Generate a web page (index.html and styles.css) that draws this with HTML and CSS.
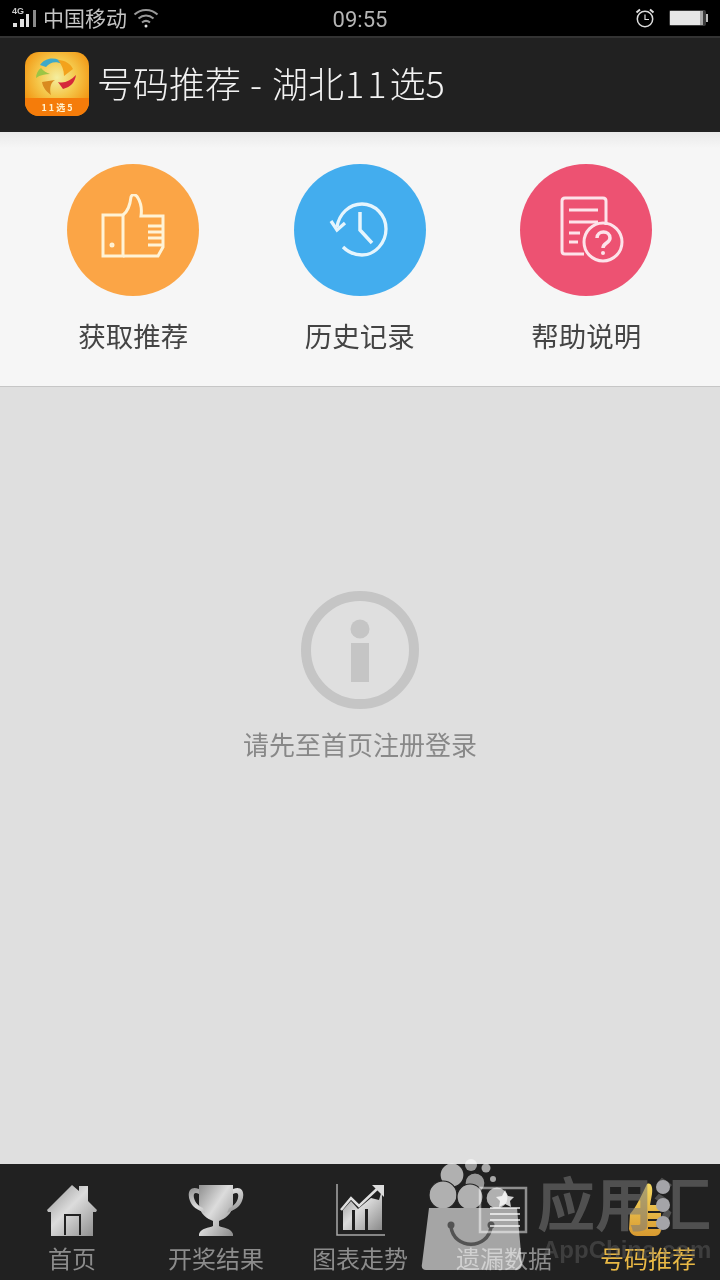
FILE: index.html
```html
<!DOCTYPE html>
<html lang="zh-CN">
<head>
  <meta charset="UTF-8">
  <meta name="viewport" content="width=device-width, initial-scale=1.0">
  <title>号码推荐</title>
  <link rel="stylesheet" href="styles.css">
</head>
<body>
  <div class="page">
    <div class="status-bar">
      <div class="status-left">
        <svg class="signal" width="28" height="22" viewBox="0 0 28 22">
          <text x="0" y="7" class="net-text">4G</text>
          <rect x="1" y="16" width="4" height="4" fill="#e0e0e0"/>
          <rect x="8" y="12" width="4" height="8" fill="#e0e0e0"/>
          <rect x="14" y="7" width="3" height="13" fill="#e0e0e0"/>
          <rect x="21" y="3" width="3" height="17" fill="#8a8a8a"/>
        </svg>
        <span class="carrier">中国移动</span>
        <svg class="wifi" width="26" height="20" viewBox="0 0 26 20" fill="none" stroke="#999" stroke-width="2">
          <path d="M1.500 6.500c6.500-6 16.500-6 23 0"/>
          <path d="M5.500 10.500c4.500-4 10.500-4 15 0"/>
          <path d="M9 14.500c2.500-2 5.500-2 8 0"/>
          <circle cx="13" cy="18" r="1.500" fill="#e0e0e0" stroke="none"/>
        </svg>
      </div>
      <span class="clock">09:55</span>
      <div class="status-right">
        <svg width="22" height="22" viewBox="0 0 22 22" fill="none" stroke="#ddd">
          <circle cx="11" cy="12" r="7.700" stroke-width="1.500"/>
          <path d="M11 7.500V12.500H15" stroke-width="1.200"/>
          <path d="M2.500 5.500L6 2.500M19.500 5.500L16 2.500" stroke-width="2"/>
        </svg>
        <svg width="46" height="20" viewBox="0 0 46 20">
          <rect x="1" y="2" width="37" height="16" rx="2" fill="#3a3a3a"/>
          <rect x="2" y="3" width="30" height="14" fill="#e6e6e6"/>
          <rect x="32" y="3" width="3" height="14" fill="#a8a8a8"/>
          <rect x="38" y="6" width="2" height="8" fill="#bbb"/>
        </svg>
      </div>
    </div>

    <div class="app-bar">
      <svg class="app-logo" width="64" height="64" viewBox="0 0 64 64">
        <defs>
          <radialGradient id="logoBg" cx="0.5" cy="0.4" r="0.6">
            <stop offset="0" stop-color="#f4eea0"/>
            <stop offset="0.5" stop-color="#f5c74a"/>
            <stop offset="1" stop-color="#f2930f"/>
          </radialGradient>
        </defs>
        <rect width="64" height="64" rx="14" fill="url(#logoBg)"/>
        <path d="M0 46H64V50A14 14 0 0 1 50 64H14A14 14 0 0 1 0 50Z" fill="#f57c0a"/>
        <path d="M15 13c4-6 12-8 19-5 2 1 3 3 3 4-6-3-12-2-16 3z" fill="#3fa9c9"/>
        <path d="M33 8c7 0 13 4 15 9l-9 7c0-6-2-11-6-16z" fill="#f3a21c"/>
        <path d="M33 30c6 2 12-1 18-7-1 7-5 12-13 14z" fill="#d5273a"/>
        <path d="M30 28c-4 2-6 8-4 15-4-3-8-7-9-13z" fill="#d98a1f"/>
        <path d="M11 26c0-4 2-8 5-10 2 3 6 5 9 6-5 0-10 1-14 4z" fill="#9cc545"/>
        <text x="32" y="59" class="logo-text">1 1 选 5</text>
      </svg>
      <div class="app-title">号码推荐<span class="title-dash">-</span>湖北<span class="title-num">11</span>选5</div>
    </div>

    <div class="actions">
      <div class="action">
        <div class="action-circle orange">
          <svg width="66" height="72" viewBox="0 0 66 72" fill="none" stroke="#fff3d6" stroke-width="3">
            <rect x="3" y="21" width="20" height="41"/>
            <path d="M23 21c4-3 7-9 8-18 1-3 5-3 7 1 3 5 4 11 3 18h22v31l-5 9H23"/>
            <path d="M48 32H62M48 38H62M48 44H62M48 51H62" stroke-width="2.800"/>
            <circle cx="12" cy="51" r="1" fill="#fff3d6"/>
          </svg>
        </div>
        <div class="action-label">获取推荐</div>
      </div>
      <div class="action">
        <div class="action-circle blue">
          <svg width="66" height="66" viewBox="0 0 66 66" fill="none" stroke="#e6f5fd" stroke-width="3.300">
            <path d="M10 30C12 17 22 7 35 7c13 0 24 11 24 25S48 58 35 58c-8 0-14-3-19-8"/>
            <path d="M4 24L10 33L18 26"/>
            <path d="M33 15V33L45 46" stroke-width="3.500"/>
          </svg>
        </div>
        <div class="action-label">历史记录</div>
      </div>
      <div class="action">
        <div class="action-circle pink">
          <svg width="80" height="70" viewBox="0 0 80 70" fill="none" stroke="#fde3ea" stroke-width="3">
            <path d="M60 30V6q0-3-3-3H19q-3 0-3 3V56q0 3 3 3H38"/>
            <path d="M23 15H52M23 27H52M23 38H34M23 47H32" stroke-width="3"/>
            <circle cx="57" cy="47" r="19"/>
            <path d="M51 43c0-8 13-8 13 0 0 5-7 5-7 10" stroke-width="3.500"/>
            <circle cx="57" cy="58" r="2" fill="#fde3ea" stroke="none"/>
          </svg>
        </div>
        <div class="action-label">帮助说明</div>
      </div>
    </div>

    <div class="content">
      <svg class="info-icon" width="120" height="120" viewBox="0 0 120 120">
        <circle cx="60" cy="60" r="54" fill="none" stroke="#c5c5c5" stroke-width="10"/>
        <circle cx="60" cy="39" r="9.500" fill="#c5c5c5"/>
        <rect x="51" y="53" width="18" height="39" fill="#c5c5c5"/>
      </svg>
      <div class="empty-text">请先至首页注册登录</div>
    </div>

    <div class="tab-bar">
      <svg width="0" height="0" class="defs">
        <defs>
          <linearGradient id="silver" x1="0" y1="0" x2="1" y2="1">
            <stop offset="0" stop-color="#8f8f8f"/>
            <stop offset="0.45" stop-color="#dcdcdc"/>
            <stop offset="1" stop-color="#8a8a8a"/>
          </linearGradient>
          <linearGradient id="gold" x1="0" y1="0" x2="0" y2="1">
            <stop offset="0" stop-color="#f6da62"/>
            <stop offset="1" stop-color="#d89a30"/>
          </linearGradient>
        </defs>
      </svg>
      <div class="tab">
        <svg width="56" height="56" viewBox="0 0 56 56">
          <path d="M3 28L28 3l7 6V4h9v15l9 9-1 2H49v24H7V30H4z" fill="url(#silver)"/>
          <path d="M21 53V33H36V53" fill="none" stroke="#222" stroke-width="2"/>
        </svg>
        <span class="tab-label">首页</span>
      </div>
      <div class="tab">
        <svg width="56" height="56" viewBox="0 0 56 56">
          <path d="M11 3H45V22C45 32 36 37 31 39V44C35 46 43 46 45 52V54H11V52C13 46 21 46 25 44V39C20 37 11 32 11 22Z" fill="url(#silver)"/>
          <path d="M11 7C1 3-1 12 2 19 4 25 10 28 17 31L15 26C10 24 7 20 6 16 5 11 7 10 11 12ZM45 7C55 3 57 12 54 19 52 25 46 28 39 31L41 26C46 24 49 20 50 16 51 11 49 10 45 12Z" fill="url(#silver)"/>
        </svg>
        <span class="tab-label">开奖结果</span>
      </div>
      <div class="tab">
        <svg width="56" height="56" viewBox="0 0 56 56">
          <path d="M5 2V53H53" fill="none" stroke="#a8a8a8" stroke-width="1.500"/>
          <path d="M11 48V28L19 19 26 27 39 16 47 18 50 8V48H36V27H33V48H23V28H20V48z" fill="url(#silver)"/>
          <path d="M9 28L19 16 27 24 45 7" fill="none" stroke="#e0e0e0" stroke-width="2.500"/>
          <path d="M40 3H52V15z" fill="#dcdcdc"/>
        </svg>
        <span class="tab-label">图表走势</span>
      </div>
      <div class="tab">
        <svg width="56" height="56" viewBox="0 0 56 56">
          <path d="M4 6H50V50H4z" fill="none" stroke="#8e8e8e" stroke-width="2.500"/>
          <path d="M14 26H44M14 32H44M14 38H44M14 44H44" stroke="#b5b5b5" stroke-width="2"/>
          <path d="M29 8l3 6 6 1-4 4 1 6-6-3-6 3 1-6-4-4 6-1z" fill="#d0d0d0"/>
        </svg>
        <span class="tab-label">遗漏数据</span>
      </div>
      <div class="tab">
        <svg width="56" height="56" viewBox="0 0 56 56">
          <path d="M10 32C17 24 21 14 27 2c4-2 6 3 5 10l-2 11h8c2 0 3 2 3 4v21c0 3-3 6-6 6H17c-4 0-7-3-8-7z" fill="url(#gold)"/>
          <path d="M28 30H41M28 38H41M28 46H41" stroke="#222" stroke-width="2"/>
        </svg>
        <span class="tab-label active">号码推荐</span>
      </div>
    </div>

    <div class="watermark">
      <svg class="wm-bag" width="110" height="122" viewBox="0 0 110 122">
        <g fill="#a4a4a4" stroke="#000" stroke-width="1.200">
          <circle cx="31" cy="17" r="12"/>
          <circle cx="54" cy="25" r="10" fill="#888"/>
          <circle cx="22" cy="37" r="14"/>
          <circle cx="49" cy="39" r="13"/>
          <circle cx="76" cy="40" r="11"/>
        </g>
        <circle cx="50" cy="7" r="6" fill="#888"/>
        <circle cx="65" cy="10" r="4.500" fill="#9a9a9a"/>
        <circle cx="72" cy="21" r="3" fill="#9a9a9a"/>
        <path d="M8 50H96L101 106C101 110 98 112 95 112H5C2 112 0 110 1 106Z" fill="#989898"/>
        <path d="M30 69C33 92 67 92 70 69" fill="none" stroke="#3a3a3a" stroke-width="3.500"/>
        <circle cx="30" cy="67" r="3.500" fill="#3a3a3a"/>
        <circle cx="70" cy="67" r="3.500" fill="#3a3a3a"/>
      </svg>
      <div class="wm-text">
        <div class="wm-name">应用汇</div>
        <div class="wm-site">AppChina.com</div>
      </div>
      <div class="wm-dots">
        <span class="wm-dot"></span>
        <span class="wm-dot"></span>
        <span class="wm-dot"></span>
      </div>
    </div>
  </div>
</body>
</html>
```

FILE: styles.css
```css
* { box-sizing: border-box; }
html, body { margin: 0; padding: 0; }
body { font-family: "Noto Sans CJK SC", "Noto Sans", sans-serif; background: #dfdfdf; }
.page { position: relative; width: 720px; height: 1280px; overflow: hidden; display: flex; flex-direction: column; }

.status-bar { height: 38px; background: #000; border-bottom: 2px solid #333; display: flex; align-items: center; justify-content: space-between; padding: 0 6px 0 12px; position: relative; flex: none; }
.status-left { display: flex; align-items: center; }
.signal { margin-right: 3px; }
.net-text { font-family: "Liberation Sans", sans-serif; font-size: 9px; font-weight: 700; fill: #ccc; }
.carrier { font-size: 21px; color: #c4c4c4; line-height: 30px; margin: 0 6px 3px 0; }
.clock { position: absolute; left: 0; right: 0; top: 0; text-align: center; font-family: Roboto, sans-serif; font-size: 22px; color: #b5b5b5; line-height: 40px; }
.status-right { display: flex; align-items: center; gap: 12px; }

.app-bar { height: 94px; background: #212121; display: flex; align-items: center; padding: 0 0 2px 25px; flex: none; }
.app-logo { flex: none; margin-right: 8px; }
.logo-text { font-size: 9px; font-weight: 700; fill: #fff3d0; text-anchor: middle; }
.app-title { font-size: 36px; font-weight: 300; color: #f2f2f2; white-space: nowrap; margin-bottom: 4px; }
.title-dash { margin: 0 10px 0 9px; }
.title-num { letter-spacing: 3px; margin-left: 1px; }

.actions { height: 255px; background: linear-gradient(#e9e9e9, #f6f6f6 16px); border-bottom: 1px solid #c6c6c6; display: flex; padding: 32px 0 0 20px; flex: none; }
.action { width: 226.500px; display: flex; flex-direction: column; align-items: center; }
.action-circle { width: 132px; height: 132px; border-radius: 50%; display: flex; align-items: center; justify-content: center; }
.orange { background: #fba546; }
.blue { background: #43adee; }
.pink { background: #ed5272; }
.action-label { font-size: 27.500px; color: #444; line-height: 38px; margin-top: 20px; }

.content { flex: 1; background: #dfdfdf; display: flex; flex-direction: column; align-items: center; padding-top: 203px; }
.info-icon { display: block; }
.empty-text { font-size: 26px; color: #888; line-height: 38px; margin-top: 15px; }

.tab-bar { height: 116px; background: #212121; display: flex; flex: none; }
.defs { position: absolute; }
.tab { width: 144px; display: flex; flex-direction: column; align-items: center; padding-top: 18px; }
.tab svg { display: block; }
.tab-label { font-size: 24px; color: #8c8c8c; line-height: 34px; margin-top: 3px; }
.tab-label.active { color: #eab945; }

.watermark { position: absolute; left: 421px; top: 1158px; width: 299px; height: 122px; pointer-events: none; }
.wm-bag { position: absolute; left: 0; top: 0; mix-blend-mode: screen; }
.wm-text { position: absolute; left: 116px; top: 8px; }
.wm-name { font-size: 58px; font-weight: 700; color: rgba(120, 120, 120, 0.55); line-height: 70px; white-space: nowrap; }
.wm-site { font-family: "Liberation Sans", sans-serif; font-size: 24px; font-weight: 700; color: rgba(110, 110, 110, 0.38); line-height: 26px; margin: 1px 0 0 5px; white-space: nowrap; }
.wm-dots { position: absolute; left: 235px; top: 22px; display: flex; flex-direction: column; gap: 4px; }
.wm-dot { width: 14px; height: 14px; border-radius: 50%; background: #a4a4a8; }
```
